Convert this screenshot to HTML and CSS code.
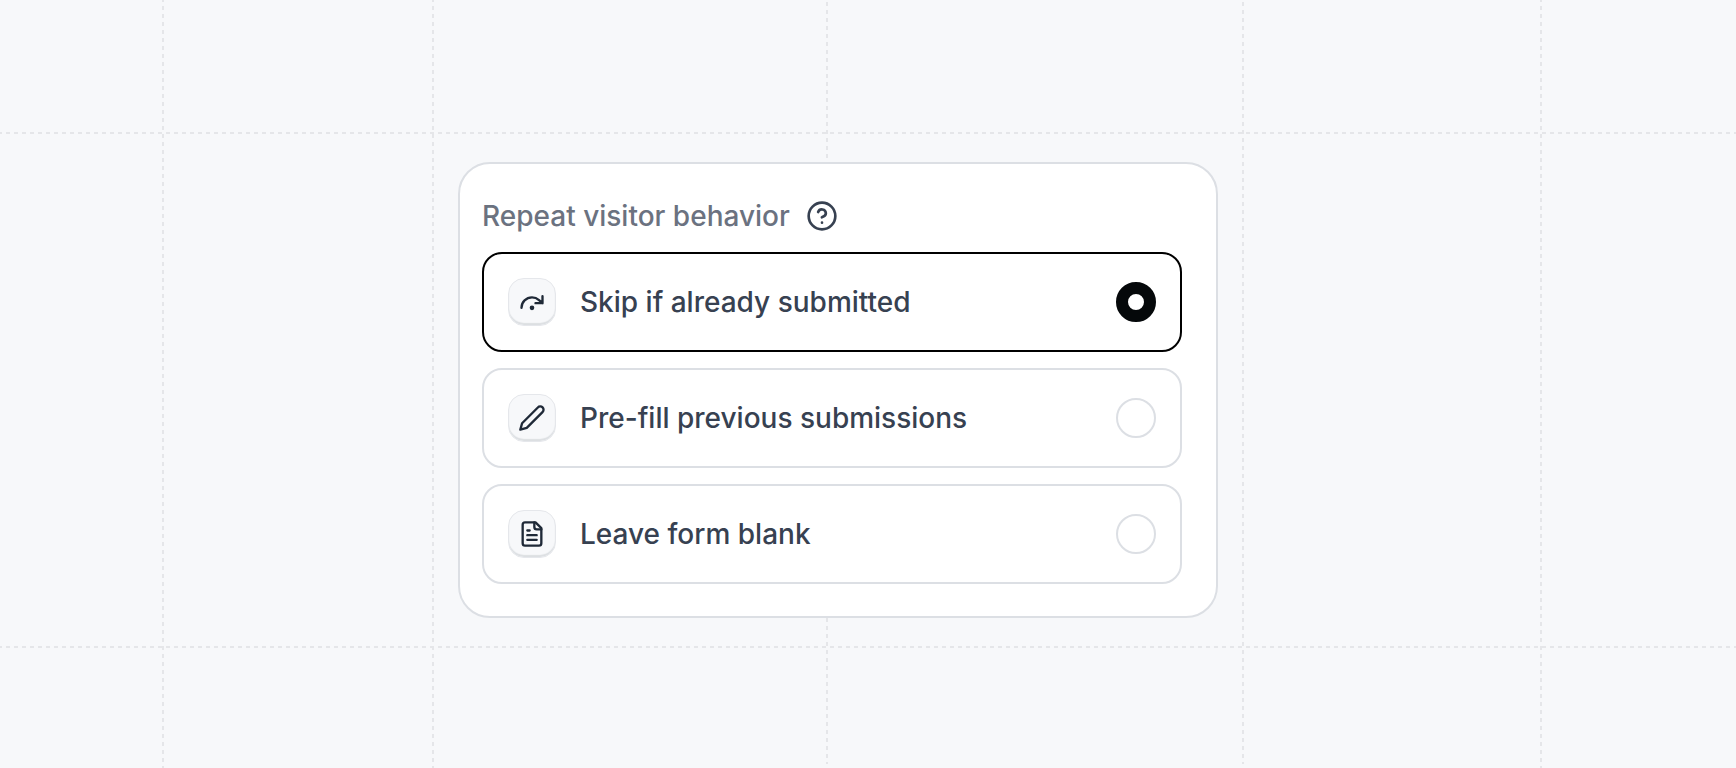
FILE: index.html
```html
<!DOCTYPE html>
<html lang="en">
<head>
    <meta charset="UTF-8">
    <meta name="viewport" content="width=device-width, initial-scale=1.0">
    <title>Repeat visitor behavior</title>
    <link rel="stylesheet" href="styles.css">
</head>
<body>
    <!-- dashed guide lines -->
    <svg class="guides" aria-hidden="true">
        <path d="M163 -2V2000M433 -2V2000M1541 -2V2000"/>
        <path d="M827 2V764M1243 2V764"/>
        <path d="M-2 133H4000M-2 647H4000"/>
    </svg>

    <form class="card">
        <fieldset class="behavior">
            <legend class="title">
                Repeat visitor behavior
                <button class="help" type="button" aria-label="Help">
                    <svg viewBox="0 0 24 24">
                        <circle cx="12" cy="12" r="10"/>
                        <path d="M9.1 9a3 3 0 0 1 5.8 1c0 2-3 3-3 3M12 17h.01"/>
                    </svg>
                </button>
            </legend>

            <label class="option">
                <span class="icon">
                    <svg viewBox="0 0 24 24">
                        <path d="M3 17a9 9 0 0 1 9-9 9 9 0 0 1 6 2.3l3 2.7M21 7v6h-6"/>
                        <circle cx="12" cy="17" r="1"/>
                    </svg>
                </span>
                <span class="text">Skip if already submitted</span>
                <input class="radio" type="radio" name="behavior" value="skip" checked>
            </label>

            <label class="option">
                <span class="icon">
                    <svg viewBox="0 0 24 24">
                        <path d="M17 3a2.83 2.83 0 1 1 4 4L7.5 20.5 2 22l1.5-5.5z"/>
                    </svg>
                </span>
                <span class="text">Pre-fill previous submissions</span>
                <input class="radio" type="radio" name="behavior" value="prefill">
            </label>

            <label class="option">
                <span class="icon">
                    <svg viewBox="0 0 24 24">
                        <path d="M15 2H6a2 2 0 0 0-2 2v16a2 2 0 0 0 2 2h12a2 2 0 0 0 2-2V7z"/>
                        <path d="M14 2v4a2 2 0 0 0 2 2h4M10 9H8M16 13H8M16 17H8"/>
                    </svg>
                </span>
                <span class="text">Leave form blank</span>
                <input class="radio" type="radio" name="behavior" value="blank">
            </label>
        </fieldset>
    </form>
</body>
</html>
```
FILE: styles.css
```css
* {
    box-sizing: border-box;
}

body {
    margin: 0;
    min-height: 100vh;
    padding: 162px 84px 0 24px;
    background: #f7f8fa;
    font-family: Inter, sans-serif;
    font-size: 28px;
    font-weight: 500;
    line-height: 40px;
    color: #374151;
    overflow: hidden;
}

.guides {
    position: absolute;
    inset: 0;
    width: 100%;
    height: 100%;
    z-index: -1;
    fill: none;
    stroke: #e5e6e9;
    stroke-width: 2;
    stroke-dasharray: 4 4;
}

.card {
    max-width: 760px;
    margin: 0 auto;
    padding: 32px 34px 32px 22px;
    background: #fff;
    border: 2px solid #dcdfe4;
    border-radius: 32px;
}

.behavior {
    display: flex;
    flex-direction: column;
    gap: 16px;
    margin: 0;
    padding: 0;
    border: 0;
    min-width: 0;
}

.title {
    display: flex;
    align-items: center;
    gap: 16px;
    margin-bottom: 16px;
    padding: 0;
    color: #6b7280;
}

.help {
    width: 32px;
    height: 32px;
    padding: 0;
    border: 0;
    background: none;
    color: #374151;
    cursor: pointer;
}

.help svg,
.icon svg {
    display: block;
    width: 100%;
    fill: none;
    stroke: currentColor;
    stroke-width: 2;
    stroke-linecap: round;
    stroke-linejoin: round;
}

.option {
    display: flex;
    align-items: center;
    gap: 24px;
    height: 100px;
    padding: 0 24px;
    border: 2px solid #dcdfe4;
    border-radius: 20px;
    cursor: pointer;
}

.option:has(.radio:checked) {
    border-color: #000;
}

.icon {
    display: flex;
    align-items: center;
    justify-content: center;
    width: 48px;
    height: 48px;
    border: 1px solid #e5e7eb;
    border-radius: 16px;
    background: #f7f8fa;
    box-shadow: inset 0 -2px 1px #dcdfe2;
    color: #1f2937;
}

.icon svg {
    width: 28px;
}

.text {
    flex: 1;
}

.radio {
    appearance: none;
    width: 40px;
    height: 40px;
    margin: 0;
    border: 2px solid #dcdfe4;
    border-radius: 50%;
    background: #fff;
    cursor: pointer;
}

.radio:checked {
    border: 12px solid #05080a;
}
```
